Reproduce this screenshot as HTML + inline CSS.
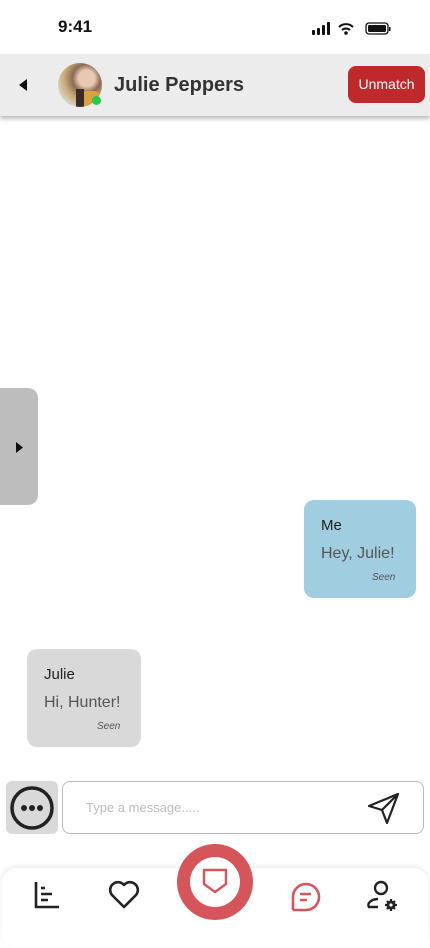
<!DOCTYPE html>
<html><head><meta charset="utf-8"><style>
*{margin:0;padding:0;box-sizing:border-box}
body{width:430px;height:932px;background:#fff;position:relative;overflow:hidden;font-family:"Liberation Sans",sans-serif}
.abs{position:absolute}
</style></head><body>
<div class="abs" style="left:58px;top:17px;font-size:17px;font-weight:bold;color:#111">9:41</div>
<svg class="abs" style="left:312px;top:22px" width="80" height="16">
<rect x="0" y="8" width="3" height="5" rx="1" fill="#111"/><rect x="5" y="6" width="3" height="7" rx="1" fill="#111"/><rect x="10" y="3" width="3" height="10" rx="1" fill="#111"/><rect x="15" y="0" width="3" height="13" rx="1" fill="#111"/>
<path d="M27 5 a10 10 0 0 1 14 0 M30 8 a6 6 0 0 1 8 0" stroke="#111" stroke-width="2" fill="none"/><circle cx="34" cy="11" r="1.8" fill="#111"/>
<rect x="54" y="1" width="22" height="11" rx="3" stroke="#111" stroke-width="1.3" fill="none"/><rect x="56" y="3" width="18" height="7" rx="1.5" fill="#111"/><rect x="77" y="5" width="1.5" height="4" fill="#111"/>
</svg>
<div class="abs" style="left:0;top:54px;width:430px;height:62px;background:#ececec;box-shadow:0 3px 4px rgba(0,0,0,.25)"></div>
<svg class="abs" style="left:17px;top:78px" width="12" height="14"><path d="M10 1 L2 7 L10 13Z" fill="#111"/></svg>
<div class="abs" style="left:58px;top:63px;width:44px;height:44px;border-radius:50%;background:radial-gradient(circle at 65% 35%,#e8c8b0 0 20%,#8a6a55 35%,#c9a978 55%,#d8d2c4 75%);overflow:hidden"><div style="position:absolute;left:22px;top:28px;width:20px;height:18px;background:#d9a240;border-radius:6px"></div><div style="position:absolute;left:18px;top:26px;width:8px;height:18px;background:#3a2a28"></div></div>
<div class="abs" style="left:92px;top:96px;width:9px;height:9px;border-radius:50%;background:#22cc44"></div>
<div class="abs" style="left:114px;top:74px;font-size:20px;font-weight:bold;color:#333">Julie Peppers</div>
<div class="abs" style="left:348px;top:66px;width:77px;height:37px;background:#c0292b;border-radius:8px;color:#fff;font-size:14px;text-align:center;line-height:37px">Unmatch</div>
<div class="abs" style="left:0;top:388px;width:38px;height:117px;background:#bdbdbd;border-radius:0 10px 10px 0"></div>
<svg class="abs" style="left:15px;top:441px" width="10" height="13"><path d="M1 1 L8 6.5 L1 12Z" fill="#111"/></svg>
<div class="abs" style="left:304px;top:500px;width:112px;height:98px;background:#a0cde0;border-radius:10px"></div>
<div class="abs" style="left:321px;top:517px;font-size:15px;color:#222">Me</div>
<div class="abs" style="left:321px;top:545px;font-size:16px;color:#555">Hey, Julie!</div>
<div class="abs" style="left:372px;top:572px;font-size:10px;font-style:italic;color:#555">Seen</div>
<div class="abs" style="left:27px;top:649px;width:114px;height:98px;background:#d9d9d9;border-radius:10px"></div>
<div class="abs" style="left:44px;top:666px;font-size:15px;color:#222">Julie</div>
<div class="abs" style="left:44px;top:694px;font-size:16px;color:#555">Hi, Hunter!</div>
<div class="abs" style="left:97px;top:721px;font-size:10px;font-style:italic;color:#555">Seen</div>
<div class="abs" style="left:6px;top:781px;width:52px;height:53px;background:#d9d9d9;border-radius:6px"></div>
<svg class="abs" style="left:9px;top:785px" width="46" height="46"><circle cx="23" cy="23" r="20" stroke="#222" stroke-width="3.5" fill="none"/><circle cx="15" cy="23" r="3" fill="#222"/><circle cx="23" cy="23" r="3" fill="#222"/><circle cx="31" cy="23" r="3" fill="#222"/></svg>
<div class="abs" style="left:62px;top:781px;width:362px;height:53px;border:1px solid #bbb;border-radius:8px"></div>
<div class="abs" style="left:86px;top:800px;font-size:13px;color:#bbb">Type a message.....</div>
<svg class="abs" style="left:366px;top:791px" width="36" height="36"><path d="M3 15 L32 3 L21 32 L16 19Z M16 19 L32 3" stroke="#222" stroke-width="2.2" fill="none" stroke-linejoin="round"/></svg>
<div class="abs" style="left:2px;top:868px;width:426px;height:80px;background:#fff;border-radius:14px;box-shadow:0 -2px 5px rgba(0,0,0,.08)"></div>
<svg class="abs" style="left:32px;top:880px" width="30" height="30"><path d="M4 2 V27 H27 M9 8 H13 M9 14 H20 M9 20 H16" stroke="#222" stroke-width="2.6" fill="none"/></svg>
<svg class="abs" style="left:107px;top:880px" width="34" height="30"><path d="M17 27 L5 15 A7 7 0 0 1 17 5 A7 7 0 0 1 29 15Z" stroke="#222" stroke-width="2.6" fill="none" stroke-linejoin="round"/></svg>
<div class="abs" style="left:177px;top:844px;width:76px;height:76px;border-radius:50%;background:#d6555b"></div>
<div class="abs" style="left:190px;top:857px;width:50px;height:50px;border-radius:50%;background:#fff"></div>
<svg class="abs" style="left:200px;top:866px" width="30" height="30"><path d="M4 4 H26 V18 L15 26 L4 18Z" stroke="#d6555b" stroke-width="2.4" fill="none" stroke-linejoin="round"/></svg>
<svg class="abs" style="left:289px;top:880px" width="34" height="34"><path d="M4 29 V17 A13 13 0 1 1 17 30 H5Z" stroke="#d6555b" stroke-width="2.6" fill="none" stroke-linejoin="round"/><path d="M11 14 H22 M11 20 H18" stroke="#d6555b" stroke-width="2.6"/></svg>
<svg class="abs" style="left:364px;top:879px" width="36" height="34"><circle cx="17" cy="9" r="6" stroke="#222" stroke-width="2.4" fill="none"/><path d="M14 20 A10 6 0 0 0 5 28 H14" stroke="#222" stroke-width="2.4" fill="none"/><circle cx="27" cy="26" r="4.5" fill="#222"/><circle cx="27" cy="26" r="1.6" fill="#fff"/><path d="M27 20 V32 M21 26 H33 M23 22 L31 30 M31 22 L23 30" stroke="#222" stroke-width="2.2"/><circle cx="27" cy="26" r="1.6" fill="#fff"/></svg>
</body></html>
